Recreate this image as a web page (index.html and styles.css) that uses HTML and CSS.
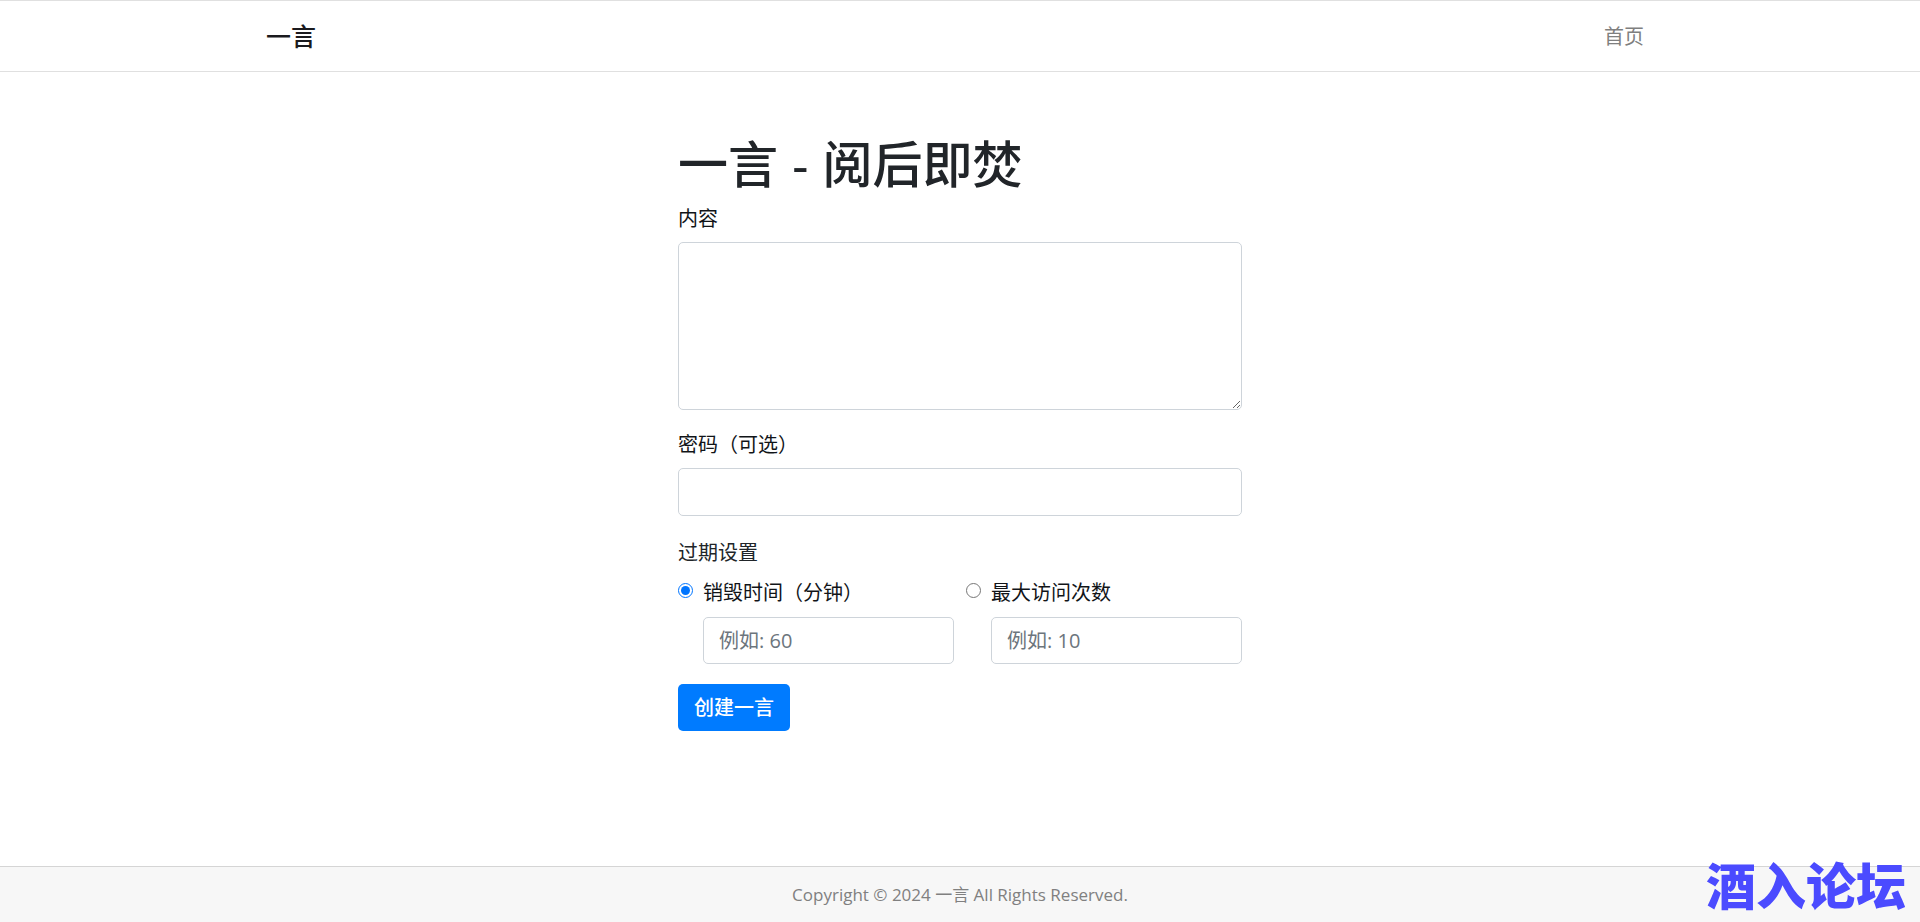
FILE: index.html
```
<!DOCTYPE html>
<html lang="zh-CN">
<head>
<meta charset="utf-8">
<meta name="viewport" content="width=device-width, initial-scale=1">
<title>一言 - 阅后即焚</title>
<link rel="stylesheet" href="styles.css">
</head>
<body>
<header class="site-header">
  <nav class="container">
    <a class="brand" href="#">一言</a>
    <a class="nav-link" href="#">首页</a>
  </nav>
</header>
<main class="main">
  <h1 class="title">一言 - 阅后即焚</h1>
  <form class="form">
    <div class="group">
      <label for="content">内容</label>
      <textarea class="control" id="content" rows="5"></textarea>
    </div>
    <div class="group">
      <label for="password">密码（可选）</label>
      <input class="control" id="password" type="text">
    </div>
    <fieldset class="expiry">
      <legend>过期设置</legend>
      <div class="options">
        <div class="option">
          <input class="radio" type="radio" name="expiry" id="by-time" checked>
          <label for="by-time">销毁时间（分钟）</label>
          <input class="control" type="text" placeholder="例如: 60" aria-label="销毁时间">
        </div>
        <div class="option">
          <input class="radio" type="radio" name="expiry" id="by-visits">
          <label for="by-visits">最大访问次数</label>
          <input class="control" type="text" placeholder="例如: 10" aria-label="最大访问次数">
        </div>
      </div>
    </fieldset>
    <button class="submit" type="button">创建一言</button>
  </form>
</main>
<footer class="site-footer">
  <p class="copyright">Copyright © 2024 一言 All Rights Reserved.</p>
  <span class="watermark">酒入论坛</span>
</footer>
</body>
</html>
```
FILE: styles.css
```
*, *::before, *::after { box-sizing: border-box; }

body {
  margin: 0;
  min-height: 100vh;
  display: flex;
  flex-direction: column;
  background: #fff;
  color: #212529;
  font-family: "Open Sans", "Noto Sans CJK SC", sans-serif;
  font-size: 20px;
  line-height: 30px;
}

.site-header {
  border-top: 1px solid #e0e0e0;
  border-bottom: 1px solid #e0e0e0;
}

.container {
  max-width: 1428px;
  margin: 0 auto;
  padding: 10px 20px;
  display: flex;
  justify-content: space-between;
  align-items: center;
}

.brand {
  color: #1a1a1e;
  font-size: 25px;
  font-weight: 500;
  line-height: 50px;
  text-decoration: none;
}

.nav-link {
  padding: 11px 10px 9px;
  color: #7f7f7f;
  text-decoration: none;
}

.main {
  flex: 1;
  width: 100%;
  max-width: 604px;
  margin: 0 auto;
  padding: 64px 20px;
}

.title {
  margin: 0 0 8px;
  font-family: "Liberation Sans", "Noto Sans CJK SC", sans-serif;
  font-size: 50px;
  font-weight: 500;
  line-height: 60px;
}

.group { margin-bottom: 20px; }

label { color: #111418; }

.group label {
  display: block;
  margin-bottom: 8px;
}

.control {
  display: block;
  width: 100%;
  height: 48px;
  padding: 8px 15px;
  border: 1px solid #ced4da;
  border-radius: 5px;
  background: #fff;
  color: #495057;
  font: inherit;
}

textarea.control {
  height: 168px;
  resize: vertical;
}

.control::placeholder {
  color: #6c757d;
  opacity: 1;
}

.expiry {
  margin: 22px 0 20px;
  padding: 0;
  border: 0;
}

.expiry legend {
  margin-bottom: 10px;
  padding: 0;
}

.options {
  display: grid;
  grid-template-columns: 1fr 1fr;
  gap: 12px;
}

.option {
  display: grid;
  grid-template-columns: 15px 1fr;
  column-gap: 10px;
  row-gap: 9px;
}

.option .control {
  grid-column: 2;
  height: 47px;
}

.radio {
  width: 15px;
  height: 15px;
  margin: 5px 0 0;
  accent-color: #0075ff;
}

.submit {
  padding: 9px 16px 8px;
  border: 0;
  border-radius: 5px;
  background: #007bff;
  color: #fff;
  font: inherit;
  font-weight: 500;
}

.site-footer {
  position: relative;
  padding: 13px 20px 12px;
  border-top: 1px solid #d5d5d5;
  background: #f7f7f7;
  text-align: center;
}

.copyright {
  margin: 0;
  color: #808080;
  font-size: 17px;
}

.watermark {
  position: absolute;
  right: 14px;
  bottom: 14px;
  color: #4b4bff;
  font-family: "Noto Sans CJK SC", sans-serif;
  font-size: 50px;
  font-weight: 900;
  line-height: 50px;
}
```
